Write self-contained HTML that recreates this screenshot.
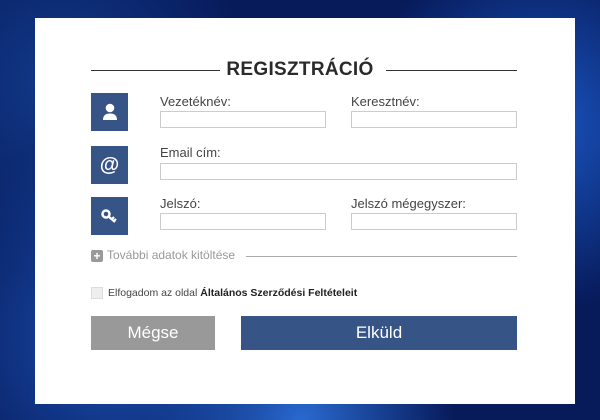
<!DOCTYPE html>
<html><head><meta charset="utf-8"><style>
*{margin:0;padding:0;box-sizing:border-box}
body{width:600px;height:420px;overflow:hidden;position:relative;font-family:"Liberation Sans",sans-serif;
background:radial-gradient(circle at 20% 80%,#1a4fb0 0,transparent 35%),radial-gradient(circle at 90% 30%,#1a55c0 0,transparent 30%),radial-gradient(circle at 50% 100%,#2a6ad0 0,transparent 30%),radial-gradient(circle at 10% 20%,#123a8a 0,transparent 30%),#071a5a;}
.panel{position:absolute;left:35px;top:18px;width:540px;height:386px;background:#fff}
.a{position:absolute}
.title{left:0;width:600px;top:59px;text-align:center;font-size:19px;font-weight:bold;color:#2a2a2a;letter-spacing:.3px}
.hl{height:1px;background:#333}
.ic{width:37px;height:38px;background:#375487;left:91px;display:flex;align-items:center;justify-content:center;color:#fff}
.lb{font-size:13px;color:#444}
.in{height:17px;border:1px solid #ccc;background:#fff}
.btn{height:34px;color:#fff;font-size:17px;display:flex;align-items:center;justify-content:center}
</style></head><body>
<div class="panel"></div>
<div class="a title">REGISZTRÁCIÓ</div>
<div class="a hl" style="left:91px;top:70px;width:129px"></div>
<div class="a hl" style="left:386px;top:70px;width:131px"></div>

<div class="a ic" style="top:93px"><svg width="16" height="18" viewBox="0 0 16 18"><circle cx="8" cy="5" r="4.3" fill="#fff"/><path d="M1 17 Q1 10.5 8 10.5 Q15 10.5 15 17Z" fill="#fff"/></svg></div>
<div class="a ic" style="top:146px;font-size:20px;font-weight:bold">@</div>
<div class="a ic" style="top:197px"><svg width="18" height="16" viewBox="0 0 18 16"><circle cx="5" cy="6" r="3.5" fill="none" stroke="#fff" stroke-width="2.5"/><path d="M7.5 8.5 L14 14 M11 11 L13 9 M13 13 L15 11" stroke="#fff" stroke-width="2.2"/></svg></div>

<div class="a lb" style="left:160px;top:94px">Vezetéknév:</div>
<div class="a lb" style="left:351px;top:94px">Keresztnév:</div>
<div class="a in" style="left:160px;top:111px;width:166px"></div>
<div class="a in" style="left:351px;top:111px;width:166px"></div>
<div class="a lb" style="left:160px;top:145px">Email cím:</div>
<div class="a in" style="left:160px;top:163px;width:357px"></div>
<div class="a lb" style="left:160px;top:196px">Jelszó:</div>
<div class="a lb" style="left:351px;top:196px">Jelszó mégegyszer:</div>
<div class="a in" style="left:160px;top:213px;width:166px"></div>
<div class="a in" style="left:351px;top:213px;width:166px"></div>

<div class="a" style="left:91px;top:250px;width:12px;height:12px;background:#999;border-radius:2px;color:#fff;font-size:12px;line-height:12px;text-align:center;font-weight:bold">+</div>
<div class="a" style="left:107px;top:248px;font-size:12px;color:#999">További adatok kitöltése</div>
<div class="a" style="left:246px;top:256px;width:271px;height:1px;background:#aaa"></div>

<div class="a" style="left:91px;top:287px;width:12px;height:12px;background:#eee;border:1px solid #ddd"></div>
<div class="a" style="left:108px;top:287px;font-size:10.5px;color:#444">Elfogadom az oldal <b style="color:#222">Általános Szerződési Feltételeit</b></div>

<div class="a btn" style="left:91px;top:316px;width:124px;background:#999">Mégse</div>
<div class="a btn" style="left:241px;top:316px;width:276px;background:#375487">Elküld</div>
</body></html>
